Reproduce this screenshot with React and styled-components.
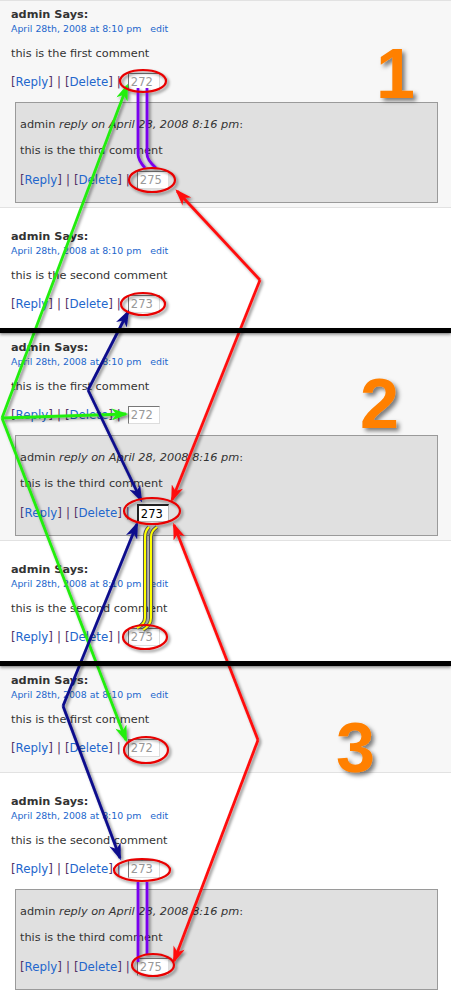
import styled, { createGlobalStyle } from "styled-components";

const GlobalStyle = createGlobalStyle`
  body {
    margin: 0;
    background: #fff;
    font-family: Verdana, "DejaVu Sans", sans-serif;
  }
`;

// each section is one snapshot of the same thread
const sections = [
  {
    first: { value: "272", reply: { value: "275" } },
    second: { value: "273" },
  },
  {
    first: { value: "272", reply: { value: "273", focused: true } },
    second: { value: "273" },
  },
  {
    first: { value: "272" },
    second: { value: "273", reply: { value: "275" } },
  },
];

const Actions = ({ value, focused, nested }) => (
  <ActionRow $nested={nested}>
    <span>[<Link>Reply</Link>]</span>
    <Pipe>|</Pipe>
    <span>[<Link>Delete</Link>]</span>
    <Pipe>|</Pipe>
    <Counter $focused={focused}>{value}</Counter>
  </ActionRow>
);

const Comment = ({ alt, text, value, reply }) => (
  <CommentBox $alt={alt}>
    <Author>admin Says:</Author>
    <Meta>
      April 28th, 2008 at 8:10 pm<Edit>edit</Edit>
    </Meta>
    <Body>{text}</Body>
    <Actions value={value} />
    {reply && (
      <ReplyBox>
        <Heading>
          admin <em>reply on April 28, 2008 8:16 pm</em>:
        </Heading>
        <Body $tight>this is the third comment</Body>
        <Actions value={reply.value} focused={reply.focused} nested />
      </ReplyBox>
    )}
  </CommentBox>
);

const Overlay = () => (
  <Annotations viewBox="0 0 451 999" width="451" height="999">
    <defs>
      <filter id="shadow" x="-20%" y="-20%" width="140%" height="140%">
        <feDropShadow dx="2" dy="2" stdDeviation="1.4" floodColor="#000" floodOpacity="0.45" />
      </filter>
      <filter id="numShadow" x="-30%" y="-30%" width="160%" height="160%">
        <feDropShadow dx="3" dy="3" stdDeviation="2" floodColor="#000" floodOpacity="0.5" />
      </filter>
      {[
        ["green", "#22ee11"],
        ["blue", "#0a0a8c"],
        ["red", "#ff1010"],
      ].map(([id, c]) => (
        <marker
          key={id}
          id={`head-${id}`}
          viewBox="0 0 14 10"
          markerWidth="18"
          markerHeight="12"
          refX="12"
          refY="5"
          orient="auto"
          markerUnits="userSpaceOnUse"
        >
          <path d="M0,0 L14,5 L0,10 L4,5 z" fill={c} />
        </marker>
      ))}
    </defs>

    <g filter="url(#shadow)" fill="none" strokeWidth="2.8" strokeLinejoin="round">
      {/* green */}
      <g stroke="#22ee11">
        <path d="M2,418 L127,86" markerEnd="url(#head-green)" />
        <path d="M2,418 L126,414" markerEnd="url(#head-green)" />
        <path d="M2,418 L126,740" markerEnd="url(#head-green)" />
      </g>
      {/* blue */}
      <g stroke="#0a0a8c">
        <path d="M88,390 L128,312" markerEnd="url(#head-blue)" />
        <path d="M88,390 L141,500" markerEnd="url(#head-blue)" />
        <path d="M63,706 L137,524" markerEnd="url(#head-blue)" />
        <path d="M63,706 L120,858" markerEnd="url(#head-blue)" />
      </g>
      {/* red */}
      <g stroke="#ff1010">
        <path d="M260,280 L177,191" markerEnd="url(#head-red)" />
        <path d="M260,280 L172,500" markerEnd="url(#head-red)" />
        <path d="M258,740 L174,525" markerEnd="url(#head-red)" />
        <path d="M258,740 L174,961" markerEnd="url(#head-red)" />
      </g>
      {/* purple */}
      <g stroke="#7a00ee">
        <path d="M138,88 L138,154 Q138,160 145,168" />
        <path d="M147,88 L147,154 Q147,160 156,168" />
        <path d="M138,882 L138,962" />
        <path d="M147,882 L147,954" />
      </g>
      {/* yellow */}
      <g>
        <path d="M149,527 Q145,531 145,537 L145,618 Q145,624 137,628" stroke="#555" strokeWidth="4" />
        <path d="M157,527 Q151,531 151,537 L151,618 Q151,625 143,630" stroke="#555" strokeWidth="4" />
        <path d="M149,527 Q145,531 145,537 L145,618 Q145,624 137,628" stroke="#ffff00" strokeWidth="2" />
        <path d="M157,527 Q151,531 151,537 L151,618 Q151,625 143,630" stroke="#ffff00" strokeWidth="2" />
      </g>
      {/* rings */}
      <g stroke="#e80000" strokeWidth="2.2">
        <ellipse cx="143" cy="81" rx="23" ry="11" />
        <ellipse cx="152" cy="180" rx="23" ry="12" />
        <ellipse cx="143" cy="304" rx="22" ry="11" />
        <ellipse cx="152" cy="511" rx="28" ry="13" />
        <ellipse cx="145" cy="637" rx="22" ry="12" />
        <ellipse cx="146" cy="750" rx="22" ry="13" />
        <ellipse cx="142" cy="870" rx="28" ry="11" />
        <ellipse cx="153" cy="965" rx="21" ry="11" />
      </g>
    </g>

    <g filter="url(#numShadow)">
      <StepNumber x="376" y="98">1</StepNumber>
      <StepNumber x="360" y="428">2</StepNumber>
      <StepNumber x="336" y="772">3</StepNumber>
    </g>
  </Annotations>
);

export default function App() {
  return (
    <Page>
      <GlobalStyle />
      {sections.map((s, i) => (
        <div key={i}>
          {i > 0 && <Bar />}
          <Comment text="this is the first comment" {...s.first} />
          <Comment alt text="this is the second comment" {...s.second} />
        </div>
      ))}
      <Overlay />
    </Page>
  );
}

const Page = styled.div`
  position: relative;
  width: 451px;
  overflow: hidden;
`;

const Bar = styled.div`
  position: relative;
  z-index: 1;
  height: 5px;
  background: #000;
  box-shadow: 0 2px 3px rgba(0, 0, 0, 0.35);
`;

const CommentBox = styled.div`
  background: ${(p) => (p.$alt ? "#fff" : "#f7f7f7")};
  border-top: 1px solid #e2e2e2;
  padding: ${(p) => (p.$alt ? 21 : 6)}px 13px 4px 11px;
  color: #333;
`;

const Author = styled.div`
  font-size: 11.3px;
  font-weight: bold;
  line-height: 16px;
`;

const Meta = styled.div`
  font-size: 9.4px;
  line-height: 12px;
  color: #2266cc;
`;

const Edit = styled.span`
  margin-left: 9px;
`;

const Body = styled.p`
  margin: ${(p) => (p.$tight ? 10 : 11)}px 0 0;
  font-size: 11.3px;
  line-height: 16px;
`;

const Heading = styled.div`
  font-size: 11.3px;
  line-height: 16px;
  em {
    font-style: italic;
  }
`;

const ActionRow = styled.div`
  display: flex;
  align-items: center;
  height: 22px;
  margin: ${(p) => (p.$nested ? "10px 0 0" : "9px 0 9px")};
  font-size: 11.8px;
  color: #553366;
  white-space: pre;
`;

const Link = styled.span`
  color: #2266cc;
`;

const Pipe = styled.span`
  margin: 0 4px;
`;

const Counter = styled.span`
  box-sizing: border-box;
  width: 32px;
  height: 18px;
  margin-left: 3px;
  padding-left: 2px;
  border: 1px solid;
  border-color: ${(p) => (p.$focused ? "#222 #bbb #bbb #222" : "#777 #ddd #ddd #777")};
  ${(p) => p.$focused && "border-width: 2px 1px 1px 2px;"}
  background: #fff;
  color: ${(p) => (p.$focused ? "#000" : "#999")};
  font-size: 11.5px;
  line-height: 16px;
`;

const ReplyBox = styled.div`
  margin: 2px 0 0 4px;
  background: #e0e0e0;
  border: 1px solid #9a9a9a;
  padding: 14px 4px 11px;
`;

const Annotations = styled.svg`
  position: absolute;
  top: 0;
  left: 0;
  pointer-events: none;
`;

const StepNumber = styled.text`
  font-family: "Liberation Sans", Arial, sans-serif;
  font-weight: bold;
  font-size: 70px;
  fill: #ff8000;
`;
